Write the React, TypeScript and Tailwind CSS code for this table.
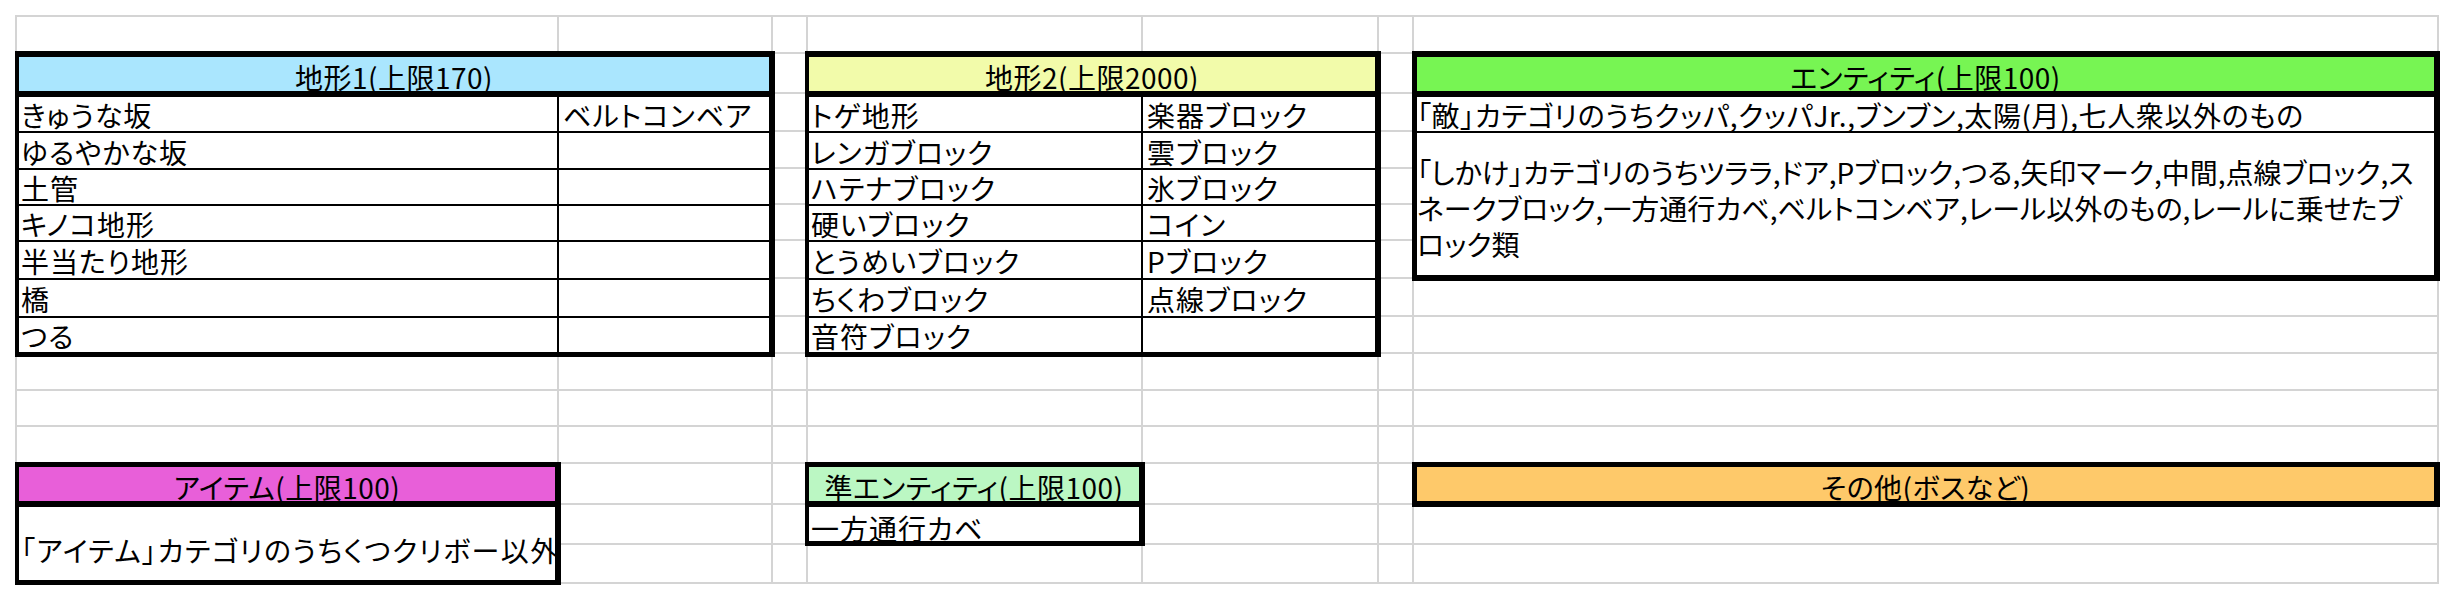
import React from "react";

const FONT =
  "font-['Noto_Sans_CJK_JP',sans-serif] text-[28px] leading-none text-black [font-feature-settings:'palt']";

function Cell({ children, className = "" }: { children?: React.ReactNode; className?: string }) {
  return (
    <div className={`flex items-center whitespace-nowrap pt-[2px] ${className}`}>
      <span className="pl-[2px] tracking-[1px]">{children}</span>
    </div>
  );
}

function Header({ title, bg, h }: { title: string; bg: string; h: string }) {
  return (
    <div className={`${bg} ${h} flex items-center justify-center whitespace-nowrap pt-[5px] border-b-[6px] border-black tracking-[0.5px]`}>
      {title}
    </div>
  );
}

const t1Rows: [string, string][] = [
  ["きゅうな坂", "ベルトコンベア"],
  ["ゆるやかな坂", ""],
  ["土管", ""],
  ["キノコ地形", ""],
  ["半当たり地形", ""],
  ["橋", ""],
  ["つる", ""],
];
const t2Rows: [string, string][] = [
  ["トゲ地形", "楽器ブロック"],
  ["レンガブロック", "雲ブロック"],
  ["ハテナブロック", "氷ブロック"],
  ["硬いブロック", "コイン"],
  ["とうめいブロック", "Pブロック"],
  ["ちくわブロック", "点線ブロック"],
  ["音符ブロック", ""],
];
const rowH = [
  "h-[36px] border-b-2",
  "h-[37px] border-b-2",
  "h-[36px] border-b-2",
  "h-[36px] border-b-2",
  "h-[38px] border-b-2",
  "h-[38px] border-b-2",
  "h-[34px]",
];

export default function App() {
  const bgCells = Array.from({ length: 15 * 7 });
  return (
    <div className={`w-[2454px] h-[600px] bg-white ${FONT}`}>
      <div className="pt-[15px] pl-[15px]">
        <div className="grid w-fit">
          {/* background gridlines */}
          <div className="col-start-1 row-start-1 grid grid-cols-[542px_214px_35px_335px_236px_35px_1025px] grid-rows-[37px_40px_38px_37px_36px_36px_38px_38px_37px_37px_36px_37px_41px_40px_39px] border-l-2 border-t-2 border-[#d4d4d4]">
            {bgCells.map((_, i) => (
              <div key={i} className="border-r-2 border-b-2 border-[#d4d4d4]" />
            ))}
          </div>
          {/* tables */}
          <div className="col-start-1 row-start-1 grid grid-cols-[542px_214px_35px_335px_236px_35px_1025px] grid-rows-[37px_40px_38px_37px_36px_36px_38px_38px_37px_37px_36px_37px_41px_40px_39px] border-l-2 border-t-2 border-transparent">
            {/* 地形1 */}
            <div className="col-start-1 col-span-2 row-start-2 row-span-8 -ml-[2px] -mr-[2px] -mt-[3px] -mb-[3px] flex flex-col bg-white border-black border-l-4 border-r-[6px] border-t-[6px] border-b-[5px]">
              <Header title="地形1(上限170)" bg="bg-[#aae6fe]" h="h-[40px]" />
              {t1Rows.map(([a, b], i) => (
                <div key={i} className={`grid grid-cols-[540px_1fr] border-black ${rowH[i]}`}>
                  <Cell className="border-r-2 border-black">{a}</Cell>
                  <Cell className="pl-[2px]">{b}</Cell>
                </div>
              ))}
            </div>
            {/* 地形2 */}
            <div className="col-start-4 col-span-2 row-start-2 row-span-8 -ml-[3px] -mr-[2px] -mt-[3px] -mb-[3px] flex flex-col bg-white border-black border-l-4 border-r-[6px] border-t-[6px] border-b-[5px]">
              <Header title="地形2(上限2000)" bg="bg-[#f2fbaa]" h="h-[40px]" />
              {t2Rows.map(([a, b], i) => (
                <div key={i} className={`grid grid-cols-[334px_1fr] border-black ${rowH[i]}`}>
                  <Cell className="border-r-2 border-black">{a}</Cell>
                  <Cell className="pl-[2px]">{b}</Cell>
                </div>
              ))}
            </div>
            {/* エンティティ */}
            <div className="col-start-7 row-start-2 row-span-6 -ml-[2px] -mr-[1px] -mt-[3px] -mb-[2px] flex flex-col bg-white border-black border-l-[5px] border-r-[6px] border-t-[6px] border-b-[6px]">
              <Header title="エンティティ(上限100)" bg="bg-[#77f553]" h="h-[40px]" />
              <div className="h-[36px] border-b-2 border-black flex items-center pt-[2px] whitespace-nowrap">
                <span className="tracking-[0.6px]">「敵」カテゴリのうちクッパ,クッパJr.,ブンブン,太陽(月),七人衆以外のもの</span>
              </div>
              <div className="h-[142px] flex items-center pt-[7px] whitespace-nowrap">
                <p className="leading-[36px]">
                  「しかけ」カテゴリのうちツララ,ドア,Pブロック,つる,矢印マーク,中間,点線ブロック,ス
                  <br />
                  ネークブロック,一方通行カベ,ベルトコンベア,レール以外のもの,レールに乗せたブ
                  <br />
                  ロック類
                </p>
              </div>
            </div>
            {/* アイテム */}
            <div className="col-start-1 row-start-13 row-span-3 -ml-[2px] -mr-[2px] -mt-[2px] -mb-[1px] flex flex-col bg-white border-black border-l-4 border-r-[6px] border-t-[5px] border-b-[5px]">
              <Header title="アイテム(上限100)" bg="bg-[#e85fd9]" h="h-[40px]" />
              <div className="h-[73px] flex items-center pt-[13px] whitespace-nowrap">
                <span className="pl-[2px] tracking-[1.5px]">「アイテム」カテゴリのうちくつクリボー以外</span>
              </div>
            </div>
            {/* 準エンティティ */}
            <div className="col-start-4 row-start-13 row-span-2 -ml-[3px] -mr-[2px] -mt-[2px] -mb-[1px] flex flex-col bg-white border-black border-l-4 border-r-[6px] border-t-[5px] border-b-[5px]">
              <Header title="準エンティティ(上限100)" bg="bg-[#bbf7c3]" h="h-[40px]" />
              <div className="h-[34px] flex items-center pt-[8px] whitespace-nowrap">
                <span className="pl-[2px] tracking-[1px]">一方通行カベ</span>
              </div>
            </div>
            {/* その他 */}
            <div className="col-start-7 row-start-13 -ml-[2px] -mr-[1px] -mt-[2px] -mb-[2px] flex bg-[#fec96a] border-black border-l-[5px] border-r-[6px] border-t-[5px] border-b-[6px]">
              <div className="flex-1 flex items-center justify-center pt-[5px] whitespace-nowrap tracking-[0.5px]">その他(ボスなど)</div>
            </div>
          </div>
        </div>
      </div>
    </div>
  );
}
